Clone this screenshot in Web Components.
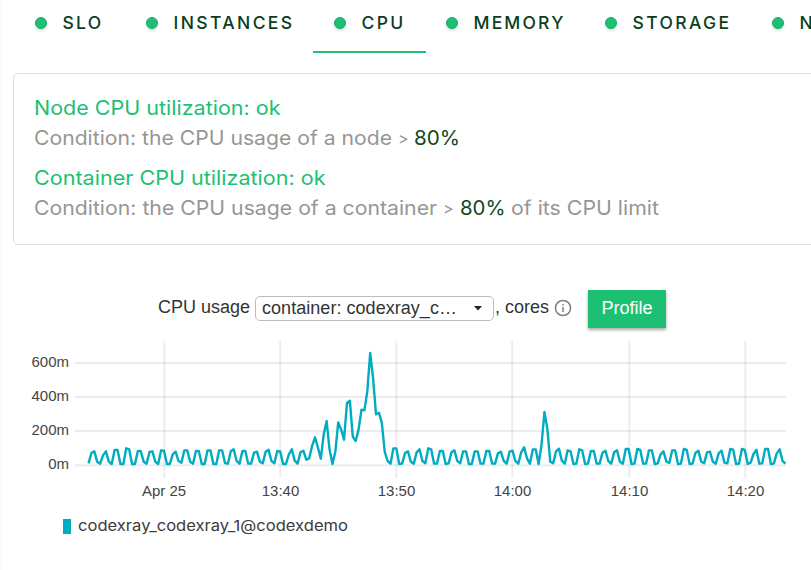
<!DOCTYPE html>
<html lang="en"><head><meta charset="utf-8"><title>CPU</title>
<style>
html,body{margin:0;height:570px;overflow:hidden;background:#fff}
</style></head><body>
<cpu-page></cpu-page>
<script>
const define=(name,html,init)=>customElements.define(name,class extends HTMLElement{
  connectedCallback(){
    if(this.shadowRoot)return;
    this.attachShadow({mode:'open'}).innerHTML=html;
    if(init)init.call(this,this.shadowRoot);
  }
});

/* Text run fitted to the given width, by tracking or (with "wide") by widening the glyphs. */
define('fit-text',`<style>:host{display:inline-block;white-space:pre}span{display:inline-block;transform-origin:0 50%}</style><span></span>`,function(r){
  const s=r.querySelector('span'),t=this.getAttribute('text'),w=+this.getAttribute('w');
  s.textContent=t;
  const n=s.getBoundingClientRect().width;
  if(this.hasAttribute('wide'))s.style.transform=`scaleX(${w/n})`;
  else s.style.letterSpacing=((w-n)/t.length)+'px';
  this.style.width=w+'px';
});

define('status-tab',`<style>
:host{display:flex;flex:none;box-sizing:border-box;height:53px;padding:0 0 8px 21px;align-items:center;border-bottom:2px solid transparent;color:#0b3d1b;font:500 17.5px/24px Inter,sans-serif}
:host([active]){border-color:#1dbf73}
i{flex:none;width:12px;height:12px;box-sizing:border-box;border-radius:50%;background:#1dbf73;border:1px solid #1aad68;box-shadow:0 2px 3px #0002;margin:3px 15.5px 0 0}
slot{display:block;padding-top:2px}
</style><i></i><slot></slot>`);

define('tab-strip',`<style>
:host{display:flex;height:53px;padding-left:14px}
</style>
<status-tab style="width:111px"><fit-text text="SLO" w="41"></fit-text></status-tab>
<status-tab style="width:188px"><fit-text text="INSTANCES" w="121"></fit-text></status-tab>
<status-tab style="width:113px" active><fit-text text="CPU" w="44"></fit-text></status-tab>
<status-tab style="width:158px;padding-left:20px"><fit-text text="MEMORY" w="92"></fit-text></status-tab>
<status-tab style="width:167px"><fit-text text="STORAGE" w="99"></fit-text></status-tab>
<status-tab style="width:150px"><fit-text text="NETWORK" w="106"></fit-text></status-tab>`);

define('check-item',`<style>
:host{display:block;height:60px;font:400 20px/30px Inter,sans-serif;color:#969696;white-space:nowrap}
div{height:30px;display:flex}
.t{color:#1dbf73}
</style><div class="t"><slot name="title"></slot></div><div><slot></slot></div>`);

define('check-card',`<style>
:host{display:flex;flex-direction:column;gap:10px;box-sizing:border-box;width:840px;height:172px;margin:20px 0 0 13px;padding:19px 20px;border:1px solid #dedede;border-radius:5px}
b{font-weight:400;color:#0b4a20}
</style>
<check-item><fit-text wide slot="title" text="Node CPU utilization: ok" w="246.5"></fit-text><fit-text wide text="Condition: the CPU usage of a node " w="364"></fit-text><fit-text text="> " w="16" style="font-size:16px"></fit-text><b><fit-text wide text="80%" w="46"></fit-text></b></check-item>
<check-item><fit-text wide slot="title" text="Container CPU utilization: ok" w="291.5"></fit-text><fit-text wide text="Condition: the CPU usage of a container " w="409"></fit-text><fit-text text="> " w="16.5" style="font-size:16px"></fit-text><b><fit-text wide text="80%" w="45.5"></fit-text></b><fit-text wide text=" of its CPU limit" w="154"></fit-text></check-item>`);

define('container-select',`<style>
:host{display:flex;align-items:center;justify-content:space-between;box-sizing:border-box;width:239px;height:25px;margin:0 1px 0 5px;padding:0 10px 0 6px;border:1px solid #bdbdbd;border-radius:5px}
svg{display:block}
</style><slot></slot><svg width="10" height="5"><path d="M1 0h8L5 4.5z" fill="#222"/></svg>`);

define('chart-header',`<style>
:host{display:flex;align-items:center;height:40px;font:18px/24px "Liberation Sans",Arial,sans-serif;color:#333;white-space:nowrap}
.i{margin:0 0 0 5px}
button{width:78px;height:38px;margin:2px 0 0 16px;border:0;padding:0 0 2px;background:#1dbf73;color:#fff;font:inherit;box-shadow:0 2px 3px #0005}
.l{margin-top:-2px}
</style>
<fit-text class="l" text="CPU usage" w="92"></fit-text>
<container-select><fit-text text="container: codexray_c…" w="195"></fit-text></container-select>
<fit-text class="l" text=", cores" w="54"></fit-text>
<svg class="i" width="18" height="18" fill="none" stroke="#808080"><circle cx="9" cy="9" r="7.6" stroke-width="1.5"/><path d="M9 8v5M9 5v1.6" stroke-width="1.5"/></svg>
<button><fit-text text="Profile" w="51"></fit-text></button>`);

/* Sample heights in thirds of a pixel, one every 15 seconds. */
const samples=[385,354,349,380,386,361,349,380,387,345,345,387,387,340,343,387,387,348,348,380,386,351,349,380,387,346,347,387,387,358,350,378,383,346,346,380,386,348,348,387,387,346,346,387,387,346,346,384,386,349,343,378,386,348,348,386,386,353,350,380,385,350,344,378,385,348,349,387,387,358,343,377,386,352,347,374,370,333,307,338,371,298,258,343,387,350,262,284,314,204,197,305,318,284,224,226,170,54,130,238,233,263,350,378,386,340,340,387,386,354,349,380,386,352,343,378,385,340,343,386,386,348,348,387,385,352,346,378,385,349,349,387,387,349,349,386,386,348,348,386,386,355,350,378,386,350,347,378,386,352,337,370,386,343,343,387,330,231,281,380,385,349,341,377,386,346,349,387,386,343,346,387,386,348,348,386,386,353,347,378,386,352,346,380,386,342,342,387,386,342,345,386,386,346,346,387,385,358,349,380,384,346,346,387,386,342,345,387,386,354,347,380,385,352,350,380,386,355,347,383,385,342,344,387,386,342,345,387,383,357,344,386,385,342,342,387,386,355,343,378,386];

define('usage-chart',`<style>
:host{display:block;height:172px}
svg{display:block}
text{font:15px "Liberation Sans",Arial,sans-serif;fill:#444}
</style><svg width="811" height="172" viewBox="0 335 811 172"></svg>`,function(r){
  let s='<g stroke="#000" stroke-opacity=".075" stroke-width="2">';
  for(const y of [363,397,431,465.3])s+=`<path d="M75 ${y}H786"/>`;
  for(const x of [164.3,280.3,396.3,512.3,629.3,745.3])s+=`<path d="M${x} 341V478"/>`;
  s+='</g><g text-anchor="end">';
  [['600m',367],['400m',401],['200m',435],['0m',469]].forEach(([t,y])=>s+=`<text x="69" y="${y}">${t}</text>`);
  s+='</g><g text-anchor="middle">';
  [['Apr 25',164],['13:40',280.5],['13:50',396.5],['14:00',512.5],['14:10',629.5],['14:20',745.5]].forEach(([t,x])=>s+=`<text x="${x}" y="496">${t}</text>`);
  s+='</g><polyline fill="none" stroke="#00acc1" stroke-width="2.4" stroke-linejoin="round" points="'+samples.map((v,i)=>(88.5+i*2.904).toFixed(2)+','+(335+v/3).toFixed(2)).join(' ')+'"/>';
  r.querySelector('svg').innerHTML=s;
});

define('chart-legend',`<style>
:host{display:flex;align-items:center;height:24px;margin:7px 0 0 63px;gap:7px;font:400 15px/24px Inter,sans-serif;color:#3b3b3b}
i{width:8px;height:15px;background:#00acc1;margin-top:1px}
</style><i></i><fit-text wide text="codexray_codexray_1@codexdemo" w="270"></fit-text>`);

define('cpu-page',`<style>
:host{display:block;width:811px;height:570px;overflow:hidden;background:linear-gradient(90deg,#f9f9f9,#fff 4px)}
chart-header{margin:43px 0 0 158px}
usage-chart{margin-top:7px}
</style><tab-strip></tab-strip><check-card></check-card><chart-header></chart-header><usage-chart></usage-chart><chart-legend></chart-legend>`);
</script></body></html>
